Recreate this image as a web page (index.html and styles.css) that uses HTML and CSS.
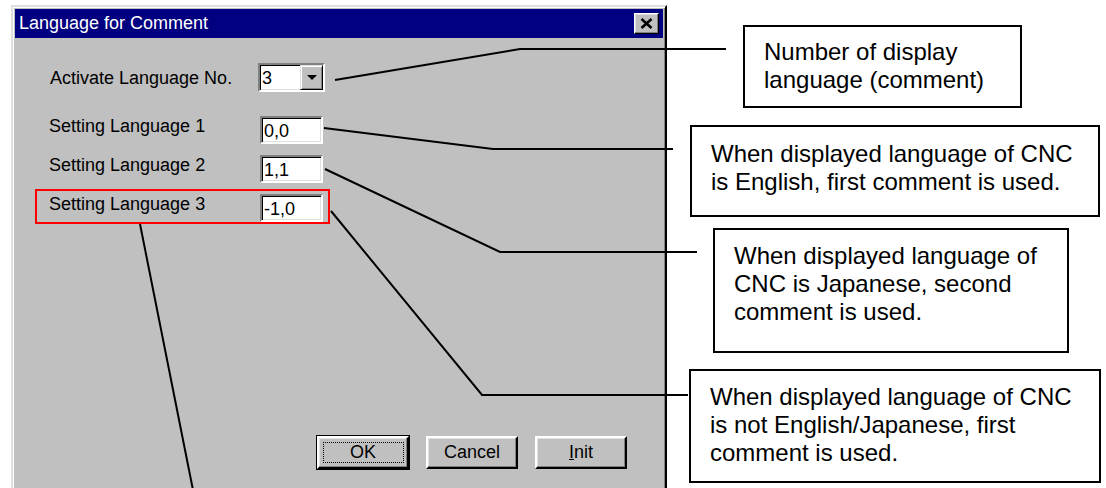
FILE: index.html
```html
<!DOCTYPE html>
<html lang="en">
<head>
    <meta charset="UTF-8">
    <title>Language for Comment</title>
    <link rel="stylesheet" href="styles.css">
</head>
<body>
    <div class="dialog">
        <div class="titlebar">
            <span class="title">Language for Comment</span>
            <span class="close-btn">
                <svg width="13" height="11" viewBox="0 0 13 11">
                    <path d="M1.5 1 L11.5 10 M11.5 1 L1.5 10" stroke="#000" stroke-width="2.6" fill="none"/>
                </svg>
            </span>
        </div>

        <div class="content">
            <div class="field-main">
                <span class="label main-label">Activate Language No.</span>
                <div class="combo">
                    <span class="combo-value">3</span>
                    <span class="combo-arrow"><span class="triangle"></span></span>
                </div>
            </div>

            <div class="rows">
                <div class="row">
                    <span class="label">Setting Language 1</span>
                    <div class="edit">0,0</div>
                </div>
                <div class="row">
                    <span class="label">Setting Language 2</span>
                    <div class="edit">1,1</div>
                </div>
                <div class="row marked">
                    <span class="label">Setting Language 3</span>
                    <div class="edit">-1,0</div>
                </div>
            </div>

            <div class="buttons">
                <button class="btn btn-default" type="button"><span class="focus">OK</span></button>
                <button class="btn" type="button">Cancel</button>
                <button class="btn" type="button"><u>I</u>nit</button>
            </div>
        </div>
    </div>

    <div class="notes">
        <div class="note note-1">Number of display language (comment)</div>
        <div class="note note-2">When displayed language of CNC is English, first comment is used.</div>
        <div class="note note-3">When displayed language of CNC is Japanese, second comment is used.</div>
        <div class="note note-4">When displayed language of CNC is not English/Japanese, first comment is used.</div>
    </div>

    <!-- leader lines from the dialog to the notes -->
    <svg class="leaders" width="1106" height="488" viewBox="0 0 1106 488">
        <g stroke="#000" stroke-width="2" fill="none">
            <polyline points="335,80 520,49 726,49"/>
            <polyline points="324,128 493,149 673,149"/>
            <polyline points="325,169 500,252 697,252"/>
            <polyline points="331,211 482,395 688,395"/>
            <polyline points="140,224 193,490"/>
        </g>
    </svg>
</body>
</html>
```

FILE: styles.css
```css
body {
    margin: 0;
    width: 1106px;
    height: 488px;
    overflow: hidden;
    position: relative;
    background-color: #ffffff;
    display: flex;
    align-items: flex-start;
    font-family: "Liberation Sans", Arial, sans-serif;
}
.dialog {
    box-sizing: border-box;
    margin: 5px 0 0 11px;
    width: 656px;
    height: 486px;
    padding: 2px;
    background-color: #c0c0c0;
    border: 2px solid;
    border-color: #dfdfdf #000000 #000000 #dfdfdf;
    box-shadow: inset 1px 1px #ffffff, inset -1px -1px #808080;
    display: flex;
    flex-direction: column;
}
.titlebar {
    height: 29px;
    padding: 0 4px;
    background-color: #000080;
    color: #ffffff;
    display: flex;
    align-items: center;
    justify-content: space-between;
}
.title {
    font-size: 18px;
}
.close-btn {
    box-sizing: border-box;
    width: 25px;
    height: 21px;
    background-color: #c0c0c0;
    border: 1px solid;
    border-color: #ffffff #000000 #000000 #ffffff;
    box-shadow: inset -1px -1px #808080, inset 1px 1px #dfdfdf;
    display: flex;
    align-items: center;
    justify-content: center;
}
.close-btn svg {
    display: block;
}
.content {
    flex: 1;
    display: flex;
    flex-direction: column;
}
.label {
    font-size: 18px;
    line-height: 20px;
    color: #000000;
}
.field-main {
    margin-top: 25px;
    padding-left: 35px;
    display: flex;
    align-items: center;
    height: 29px;
}
.main-label {
    width: 208px;
}
.combo {
    box-sizing: border-box;
    width: 67px;
    height: 29px;
    background-color: #ffffff;
    border: 2px solid;
    border-color: #808080 #ffffff #ffffff #808080;
    box-shadow: inset 1px 1px #000000, inset -1px -1px #dfdfdf;
    display: flex;
    justify-content: space-between;
}
.combo-value {
    padding: 1px 0 0 2px;
    font-size: 18px;
    line-height: 24px;
}
.combo-arrow {
    box-sizing: border-box;
    width: 23px;
    height: 25px;
    margin-top: 0;
    background-color: #c0c0c0;
    border: 1px solid;
    border-color: #dfdfdf #000000 #000000 #dfdfdf;
    box-shadow: inset 1px 1px #ffffff, inset -1px -1px #808080;
    display: flex;
    align-items: center;
    justify-content: center;
}
.triangle {
    width: 0;
    height: 0;
    border-left: 5px solid transparent;
    border-right: 5px solid transparent;
    border-top: 5px solid #000000;
}
.rows {
    margin: 19px 0 0 20px;
    display: flex;
    flex-direction: column;
    gap: 4px;
}
.row {
    box-sizing: border-box;
    width: 295px;
    height: 35px;
    padding: 3px 5px 0 12px;
    border: 2px solid transparent;
    display: flex;
    align-items: flex-start;
}
.row .label {
    width: 211px;
}
.row.marked {
    border-color: #ff0000;
}
.edit {
    box-sizing: border-box;
    width: 63px;
    height: 28px;
    padding: 1px 0 0 2px;
    background-color: #ffffff;
    border: 2px solid;
    border-color: #808080 #ffffff #ffffff #808080;
    box-shadow: inset 1px 1px #000000, inset -1px -1px #dfdfdf;
    font-size: 18px;
    line-height: 24px;
}
.buttons {
    margin-top: auto;
    margin-bottom: 18px;
    padding-right: 36px;
    display: flex;
    justify-content: flex-end;
    align-items: center;
    gap: 17px;
}
.btn {
    box-sizing: border-box;
    width: 92px;
    height: 33px;
    padding: 0;
    background-color: #c0c0c0;
    border: 2px solid;
    border-color: #ffffff #000000 #000000 #ffffff;
    box-shadow: inset -1px -1px #808080, inset 1px 1px #dfdfdf;
    font-family: "Liberation Sans", Arial, sans-serif;
    font-size: 18px;
    color: #000000;
    display: flex;
    align-items: center;
    justify-content: center;
}
.btn-default {
    outline: 1px solid #000000;
}
.focus {
    box-sizing: border-box;
    width: 81px;
    height: 21px;
    border: 1px dotted #000000;
    line-height: 19px;
    text-align: center;
}
.notes {
    display: flex;
    flex-direction: column;
    align-items: flex-start;
}
.note {
    box-sizing: border-box;
    border: 2px solid #000000;
    padding: 12px 19px;
    font-size: 24px;
    line-height: 28px;
    color: #000000;
    background-color: #ffffff;
}
.note-1 {
    margin: 25px 0 0 76px;
    width: 279px;
    height: 83px;
    padding-top: 11px;
}
.note-2 {
    margin: 17px 0 0 23px;
    width: 410px;
    height: 92px;
    padding-top: 13px;
}
.note-3 {
    margin: 11px 0 0 46px;
    width: 356px;
    height: 125px;
}
.note-4 {
    margin: 16px 0 0 22px;
    width: 412px;
    height: 114px;
}
.leaders {
    position: absolute;
    left: 0;
    top: 0;
    pointer-events: none;
}
```
